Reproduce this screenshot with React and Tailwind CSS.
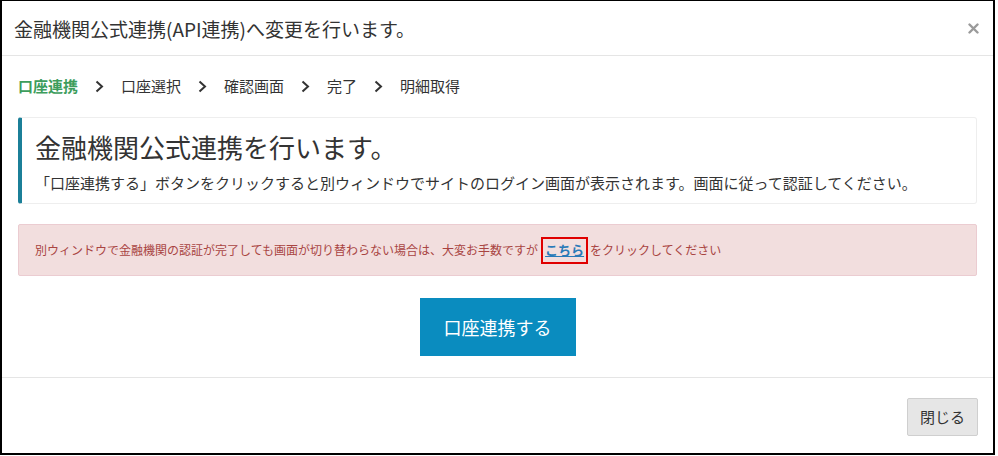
import React from "react";

const font = { fontFamily: '"Noto Sans CJK JP", "Liberation Sans", sans-serif' };

function Chevron() {
  return (
    <svg width="9" height="13" viewBox="0 0 9 13" className="shrink-0">
      <polyline points="1.5,1.5 7,6.5 1.5,11.5" fill="none" stroke="#333" strokeWidth="2" />
    </svg>
  );
}

export default function App() {
  const steps = ["口座選択", "確認画面", "完了", "明細取得"];
  return (
    <div className="w-[998px] h-[456px] bg-white">
      <div
        className="w-[995px] h-[455px] border-x-2 border-b-2 border-t border-black bg-white flex flex-col"
        style={font}
      >
        <div className="h-[55px] shrink-0 border-b border-[#e5e5e5] flex items-center justify-between pl-[12px] pr-[14px]">
          <div className="text-[19px] text-[#333] leading-none">金融機関公式連携(API連携)へ変更を行います。</div>
          <svg width="11" height="11" viewBox="0 0 11 11">
            <path d="M1.5 1.5 L9.5 9.5 M9.5 1.5 L1.5 9.5" stroke="#9a9a9a" strokeWidth="2.4" strokeLinecap="round" />
          </svg>
        </div>
        <div className="px-[16px] pt-[20px] flex flex-col">
          <div className="flex items-center gap-[17px] text-[15px] leading-[20px] text-[#333]">
            <span className="text-[#3d9d5c] font-bold">口座連携</span>
            {steps.map((s) => (
              <React.Fragment key={s}>
                <Chevron />
                <span>{s}</span>
              </React.Fragment>
            ))}
          </div>
          <div className="mt-[21px] h-[87px] border border-[#eeeeee] border-l-4 border-l-[#1b7f98] rounded-[3px] pl-[13px] pt-[13px]">
            <div className="text-[26px] leading-[31px] text-[#333]">金融機関公式連携を行います。</div>
            <div className="mt-[11px] text-[15px] leading-[20px] text-[#333]">
              「口座連携する」ボタンをクリックすると別ウィンドウでサイトのログイン画面が表示されます。画面に従って認証してください。
            </div>
          </div>
          <div className="mt-[20px] h-[52px] bg-[#f2dede] border border-[#ebccd1] rounded-[2px] pl-[16px] flex items-center text-[12px] text-[#a94442]">
            <span>別ウィンドウで金融機関の認証が完了しても画面が切り替わらない場合は、大変お手数ですが</span>
            <span className="ml-[3px] border-2 border-[#e00000] h-[27px] px-[2px] flex items-center">
              <span className="text-[13px] font-semibold text-[#2a7ab8] underline">こちら</span>
            </span>
            <span className="ml-[2px]">をクリックしてください</span>
          </div>
          <div className="mt-[22px] flex justify-center">
            <div className="w-[156px] h-[58px] bg-[#0a8cbf] text-white text-[18px] flex items-center justify-center">
              口座連携する
            </div>
          </div>
        </div>
        <div className="mt-[21px] border-t border-[#e5e5e5] flex-1 flex justify-end items-start pt-[20px] pr-[15px]">
          <div className="w-[71px] h-[38px] bg-[#e6e6e6] border border-[#cfcfcf] rounded-[2px] flex items-center justify-center text-[15px] text-[#333]">
            閉じる
          </div>
        </div>
      </div>
    </div>
  );
}
